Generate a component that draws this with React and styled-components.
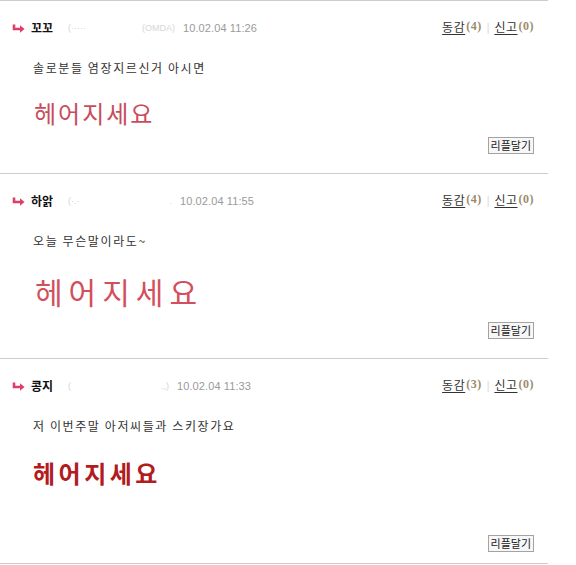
import React from "react";
import styled, { createGlobalStyle } from "styled-components";

const Global = createGlobalStyle`
  html, body { margin: 0; padding: 0; background: #fff; }
  body { font-family: "Noto Sans CJK KR", "Noto Sans", sans-serif; color: #333; }
`;

const List = styled.div`
  width: 548px;
  display: flex;
  flex-direction: column;
`;

const Comment = styled.section`
  border-top: 1px solid #cdcdcd;
  padding: 19px 14px ${(p) => p.$bottom}px 0;
  display: flex;
  flex-direction: column;
`;

const Header = styled.div`
  display: flex;
  align-items: center;
  height: 16px;
`;

const Arrow = styled.svg`
  width: 13px;
  height: 10px;
  margin-left: 12px;
  flex: none;
`;

const Name = styled.span`
  margin-left: 6px;
  font-size: 12px;
  font-weight: 700;
  color: #111;
  line-height: 16px;
  width: 24px;
  white-space: nowrap;
`;

const Id = styled.span`
  margin-left: 13px;
  width: ${(p) => p.$w}px;
  display: flex;
  justify-content: space-between;
  font-family: "Liberation Sans", sans-serif;
  font-size: 9px;
  color: #d6d6d6;
  white-space: nowrap;
`;

const Date = styled.span`
  margin-left: 8px;
  font-family: "Liberation Sans", sans-serif;
  font-size: 11px;
  color: #9a9a9a;
  letter-spacing: 0.1px;
`;

const Links = styled.span`
  margin-left: auto;
  font-size: 12px;
  display: flex;
  align-items: center;
  color: #333;
  transform: translateY(-2px);
`;

const Link = styled.a`
  color: #333;
  text-decoration: underline;
  text-underline-offset: 2px;
  letter-spacing: 0.5px;
`;

const Count = styled.span`
  font-family: "Liberation Serif", serif;
  font-weight: 700;
  font-size: 12px;
  color: #9b8b6e;
  margin-left: 1px;
  letter-spacing: 0.5px;
`;

const Sep = styled.span`
  color: #ccc;
  font-size: 10px;
  margin: 0 5px;
`;

const Body = styled.p`
  margin: 23px 0 0 33px;
  font-size: 12px;
  line-height: 18px;
  letter-spacing: 1.6px;
  color: #333;
`;

const Punchline = styled.div`
  margin: ${(p) => p.$top}px 0 0 ${(p) => p.$left}px;
  font-size: ${(p) => p.$size}px;
  line-height: 1;
  font-weight: ${(p) => (p.$bold ? 700 : 400)};
  letter-spacing: ${(p) => p.$spacing}px;
  color: ${(p) => p.$color};
  white-space: nowrap;
`;

const ReplyRow = styled.div`
  margin-top: ${(p) => p.$top}px;
  display: flex;
  justify-content: flex-end;
`;

const ReplyButton = styled.button`
  height: 17px;
  padding: 0 2px;
  border: 1px solid #a3a3a3;
  background: #f7f7f7;
  font-family: "Noto Sans CJK KR", sans-serif;
  font-size: 11px;
  line-height: 15px;
  color: #222;
  border-radius: 0;
`;

const comments = [
  {
    name: "꼬꼬",
    idW: 107,
    idL: "(·····",
    idR: "(OMDA)",
    date: "10.02.04 11:26",
    agree: 4,
    report: 0,
    text: "솔로분들 염장지르신거 아시면",
    big: { size: 24, spacing: 2, color: "#c84d5c", top: 24, left: 34, bold: false },
    replyTop: 12,
    bottom: 19,
  },
  {
    name: "하앍",
    idW: 104,
    idL: "(·.·",
    idR: ".",
    date: "10.02.04 11:55",
    agree: 4,
    report: 0,
    text: "오늘 무슨말이라도~",
    big: { size: 30, spacing: 6, color: "#d24f5d", top: 26, left: 35, bold: false },
    replyTop: 16,
    bottom: 19,
  },
  {
    name: "콩지",
    idW: 101,
    idL: "(",
    idR: ".,)",
    date: "10.02.04 11:33",
    agree: 3,
    report: 0,
    text: "저 이번주말 아저씨들과 스키장가요",
    big: { size: 24, spacing: 3.5, color: "#b21c1f", top: 26, left: 33, bold: true },
    replyTop: 50,
    bottom: 11,
  },
];

const ArrowIcon = () => (
  <Arrow viewBox="0 0 13 10">
    <path d="M2 1.5 V6 H8.5" fill="none" stroke="#de3f68" strokeWidth="2.6" />
    <polygon points="8,2.2 12.5,6 8,9.8" fill="#de3f68" />
  </Arrow>
);

export default function App() {
  return (
    <>
      <Global />
      <List>
        {comments.map((c, i) => (
          <Comment key={i} $bottom={c.bottom}>
            <Header>
              <ArrowIcon />
              <Name>{c.name}</Name>
              <Id $w={c.idW}>
                <span>{c.idL}</span>
                <span>{c.idR}</span>
              </Id>
              <Date>{c.date}</Date>
              <Links>
                <Link>동감</Link>
                <Count>({c.agree})</Count>
                <Sep>|</Sep>
                <Link>신고</Link>
                <Count>({c.report})</Count>
              </Links>
            </Header>
            <Body>{c.text}</Body>
            <Punchline
              $size={c.big.size}
              $spacing={c.big.spacing}
              $color={c.big.color}
              $top={c.big.top}
              $left={c.big.left}
              $bold={c.big.bold}
            >
              헤어지세요
            </Punchline>
            <ReplyRow $top={c.replyTop}>
              <ReplyButton>리플달기</ReplyButton>
            </ReplyRow>
          </Comment>
        ))}
        <Comment $bottom={0} />
      </List>
    </>
  );
}
